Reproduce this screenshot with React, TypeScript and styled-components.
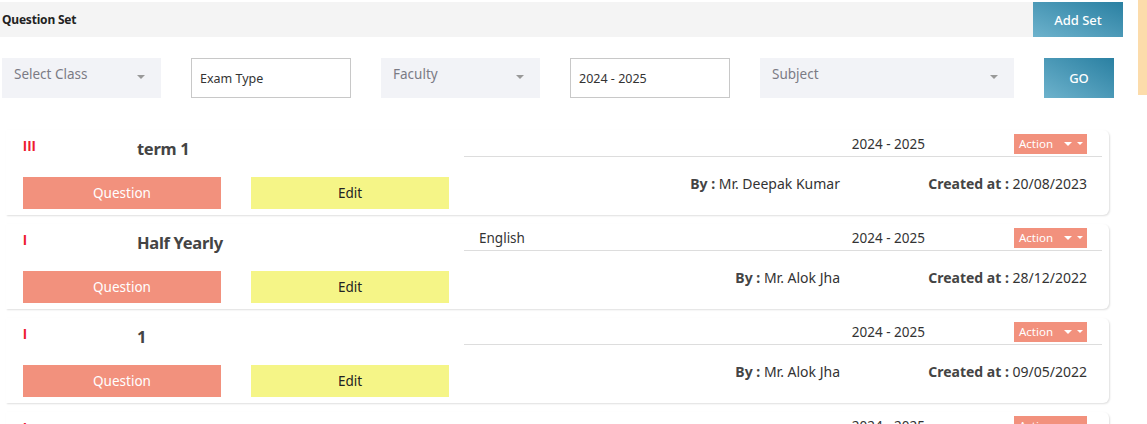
import React from 'react';
import styled, { createGlobalStyle } from 'styled-components';

const GlobalStyle = createGlobalStyle`
  body {
    margin: 0;
    background: #ffffff;
    font-family: 'Noto Sans', 'Open Sans', Arial, sans-serif;
    color: #333333;
  }
`;

const Page = styled.div`
  display: flex;
  align-items: flex-start;
`;

const Main = styled.div`
  width: 1123px;
  padding-top: 2px;
`;

const SideStrip = styled.div`
  width: 9px;
  height: 95px;
  margin-left: 15px;
  background: #fcdcab;
`;

const Header = styled.div`
  height: 35px;
  background: #f4f4f4;
  display: flex;
  align-items: center;
  justify-content: space-between;
`;

const Title = styled.h1`
  margin: 0 0 0 2px;
  font-size: 12px;
  font-weight: 700;
  color: #222222;
  letter-spacing: -0.2px;
`;

const BlueButton = styled.button<{ $w: number; $h: number }>`
  width: ${p => p.$w}px;
  height: ${p => p.$h}px;
  border: none;
  background: linear-gradient(to bottom left, #2a80a2, #6db2cc);
  color: #ffffff;
  font-family: inherit;
  font-size: 13px;
  font-weight: 500;
  cursor: pointer;
`;

const FilterRow = styled.div`
  display: flex;
  gap: 30px;
  margin: 21px 0 0 2px;
  height: 40px;
`;

const Select = styled.div<{ $w: number }>`
  width: ${p => p.$w}px;
  height: 40px;
  box-sizing: border-box;
  background: #f2f3f7;
  padding: 7px 12px 0 12px;
  display: flex;
  justify-content: space-between;
  font-size: 13.5px;
  color: #7b7b85;
`;

const Caret = styled.span<{ $size: number; $color: string }>`
  width: 0;
  height: 0;
  border-left: ${p => p.$size}px solid transparent;
  border-right: ${p => p.$size}px solid transparent;
  border-top: ${p => p.$size}px solid ${p => p.$color};
  display: inline-block;
`;

const SelectCaret = styled(Caret)`
  margin-top: 10px;
  margin-right: 4px;
`;

const Input = styled.div`
  width: 160px;
  height: 40px;
  box-sizing: border-box;
  border: 1px solid #c8c8c8;
  padding: 0 8px;
  display: flex;
  align-items: center;
  font-size: 12.5px;
  color: #333333;
`;

const List = styled.div`
  margin: 32px 0 0 6px;
  width: 1103px;
  display: flex;
  flex-direction: column;
  gap: 9px;
`;

const Card = styled.div`
  height: 85px;
  box-sizing: border-box;
  display: flex;
  border-radius: 0 6px 6px 0;
  box-shadow: 1px 1px 2px rgba(0, 0, 0, 0.13);
`;

const LeftCol = styled.div`
  width: 458px;
  box-sizing: border-box;
  padding: 8px 0 0 17px;
`;

const TitleRow = styled.div`
  display: flex;
  height: 39px;
`;

const Marker = styled.span`
  width: 114px;
  color: #ee1c2e;
  font-family: 'Liberation Sans', Arial, sans-serif;
  font-size: 14px;
  font-weight: 700;
  letter-spacing: 0.5px;
  line-height: 14px;
  margin-top: 1px;
`;

const SetName = styled.div`
  font-size: 16.5px;
  font-weight: 700;
  color: #444444;
  line-height: 22px;
  letter-spacing: -0.3px;
`;

const Buttons = styled.div`
  display: flex;
  gap: 30px;
`;

const ActButton = styled.button<{ $bg: string; $fg: string }>`
  width: 198px;
  height: 32px;
  border: none;
  background: ${p => p.$bg};
  color: ${p => p.$fg};
  font-family: inherit;
  font-size: 13.5px;
  cursor: pointer;
`;

const RightCol = styled.div`
  flex: 1;
  margin-right: 7px;
  display: flex;
  flex-direction: column;
`;

const TopRow = styled.div`
  height: 27px;
  box-sizing: border-box;
  border-bottom: 1px solid #dddddd;
  display: grid;
  grid-template-columns: 1fr 150px 162px;
  align-items: center;
  padding: 1px 15px 0 15px;
  font-size: 13.5px;
  color: #333333;
`;

const Year = styled.span`
  text-align: right;
`;

const ActionCell = styled.div`
  display: flex;
  justify-content: flex-end;
`;

const ActionButton = styled.button`
  height: 20px;
  width: 73px;
  border: none;
  background: #f2917d;
  color: #ffffff;
  font-family: inherit;
  font-size: 11.5px;
  display: flex;
  align-items: center;
  padding: 0 0 0 5px;
  cursor: pointer;
`;

const ActionLabel = styled.span`
  margin-right: 11px;
`;

const SmallCaret = styled(Caret)`
  margin-right: 5px;
`;

const BottomRow = styled.div`
  flex: 1;
  display: grid;
  grid-template-columns: 1fr 247px;
  align-items: center;
  padding: 0 15px 5px 15px;
  font-size: 14px;
  color: #333333;
`;

const Meta = styled.span`
  text-align: right;
  white-space: nowrap;
  & b {
    font-weight: 700;
    color: #444444;
  }
`;

interface QuestionSetItem {
  marker: string;
  name: string;
  subject: string;
  year: string;
  by: string;
  created: string;
}

const sets: QuestionSetItem[] = [
  { marker: 'III', name: 'term 1', subject: '', year: '2024 - 2025', by: 'Mr. Deepak Kumar', created: '20/08/2023' },
  { marker: 'I', name: 'Half Yearly', subject: 'English', year: '2024 - 2025', by: 'Mr. Alok Jha', created: '28/12/2022' },
  { marker: 'I', name: '1', subject: '', year: '2024 - 2025', by: 'Mr. Alok Jha', created: '09/05/2022' },
  { marker: 'I', name: 'Mock final Test', subject: '', year: '2024 - 2025', by: 'Mr. Alok Jha', created: '01/03/2022' },
];

const SetCard: React.FC<{ item: QuestionSetItem }> = ({ item }) => (
  <Card>
    <LeftCol>
      <TitleRow>
        <Marker>{item.marker}</Marker>
        <SetName>{item.name}</SetName>
      </TitleRow>
      <Buttons>
        <ActButton $bg="#f2917d" $fg="#ffffff">Question</ActButton>
        <ActButton $bg="#f5f587" $fg="#222222">Edit</ActButton>
      </Buttons>
    </LeftCol>
    <RightCol>
      <TopRow>
        <span>{item.subject}</span>
        <Year>{item.year}</Year>
        <ActionCell>
          <ActionButton>
            <ActionLabel>Action</ActionLabel>
            <SmallCaret $size={4} $color="#ffffff" />
            <Caret $size={3} $color="#ffffff" />
          </ActionButton>
        </ActionCell>
      </TopRow>
      <BottomRow>
        <Meta><b>By :</b> {item.by}</Meta>
        <Meta><b>Created at :</b> {item.created}</Meta>
      </BottomRow>
    </RightCol>
  </Card>
);

const App: React.FC = () => {
  return (
    <>
      <GlobalStyle />
      <Page>
        <Main>
          <Header>
            <Title>Question Set</Title>
            <BlueButton $w={90} $h={35}>Add Set</BlueButton>
          </Header>
          <FilterRow>
            <Select $w={159}>
              <span>Select Class</span>
              <SelectCaret $size={4} $color="#999999" />
            </Select>
            <Input>Exam Type</Input>
            <Select $w={159}>
              <span>Faculty</span>
              <SelectCaret $size={4} $color="#999999" />
            </Select>
            <Input>2024 - 2025</Input>
            <Select $w={254}>
              <span>Subject</span>
              <SelectCaret $size={4} $color="#999999" />
            </Select>
            <BlueButton $w={70} $h={40}>GO</BlueButton>
          </FilterRow>
          <List>
            {sets.map((s, i) => (
              <SetCard key={i} item={s} />
            ))}
          </List>
        </Main>
        <SideStrip />
      </Page>
    </>
  );
};

export default App;
